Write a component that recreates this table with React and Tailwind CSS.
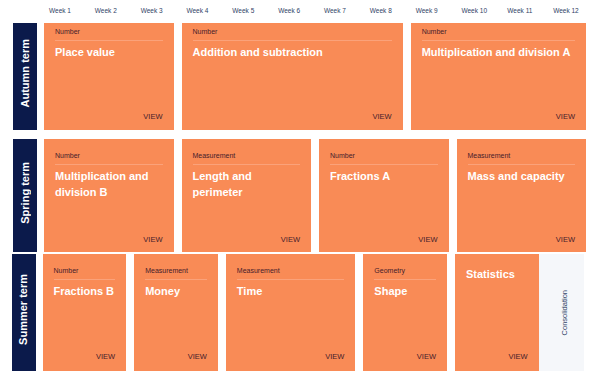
import React from "react";

const weeks = Array.from({ length: 12 }, (_, i) => `Week ${i + 1}`);

const terms = [
  {
    name: "Autumn term",
    height: "h-[107px]",
    gap: "mt-0",
    shift: "ml-0",
    pt: "pt-[4px]",
    pb: "pb-[9px]",
    blocks: [
      { span: "col-span-3", cat: "Number", title: "Place value" },
      { span: "col-span-5", cat: "Number", title: "Addition and subtraction" },
      { span: "col-span-4", cat: "Number", title: "Multiplication and division A" },
    ],
  },
  {
    name: "Spring term",
    height: "h-[113px]",
    gap: "mt-[9px]",
    shift: "ml-0",
    pt: "pt-[12px]",
    pb: "pb-[8px]",
    blocks: [
      { span: "col-span-3", cat: "Number", title: "Multiplication and division B" },
      { span: "col-span-3", cat: "Measurement", title: "Length and perimeter" },
      { span: "col-span-3", cat: "Number", title: "Fractions A" },
      { span: "col-span-3", cat: "Measurement", title: "Mass and capacity" },
    ],
  },
  {
    name: "Summer term",
    height: "h-[117px]",
    gap: "mt-[2px]",
    shift: "-ml-[1.5px]",
    pt: "pt-[12px]",
    pb: "pb-[10px]",
    blocks: [
      { span: "col-span-2", cat: "Number", title: "Fractions B" },
      { span: "col-span-2", cat: "Measurement", title: "Money" },
      { span: "col-span-3", cat: "Measurement", title: "Time" },
      { span: "col-span-2", cat: "Geometry", title: "Shape" },
      { span: "col-span-2", cat: null, title: "Statistics" },
    ],
    consolidation: true,
  },
];

const Block = ({ block, pt, pb }) => (
  <div className={`${block.span} flex flex-col bg-[#f98b56] px-[11px] ${pt} ${pb}`}>
    {block.cat && (
      <>
        <div className="text-[7px] leading-[9px] text-[#45202b]">{block.cat}</div>
        <div className="mt-[3.5px] h-px bg-[#fba27a]" />
        <div className="mt-[3px] text-[11px] font-bold leading-[16px] text-white">
          {block.title}
        </div>
      </>
    )}
    {!block.cat && (
      <div className="text-[11px] font-bold leading-[16px] text-white">{block.title}</div>
    )}
    <div className="mt-auto text-right text-[7.5px] leading-[9px] text-[#45202b]">VIEW</div>
  </div>
);

const App = () => {
  return (
    <div
      className="h-[379px] w-[600px] bg-white pl-[13px]"
      style={{ fontFamily: '"Liberation Sans", Arial, sans-serif' }}
    >
      <div className="flex h-[23px] items-center">
        <div className="w-[31px] shrink-0" />
        <div className="grid w-[542px] grid-cols-12 gap-x-2">
          {weeks.map((w) => (
            <div key={w} className="pl-[5px] text-[6.5px] leading-none text-[#2f4266]">
              {w}
            </div>
          ))}
        </div>
      </div>

      {terms.map((term) => (
        <div key={term.name} className={`flex ${term.height} ${term.gap} ${term.shift}`}>
          <div className="mr-[7px] flex w-[24px] shrink-0 items-center justify-center bg-[#0b1a4b] pb-[6px]">
            <span className="rotate-180 text-[11px] font-bold leading-none text-white [writing-mode:vertical-rl]">
              {term.name}
            </span>
          </div>
          <div className="grid w-[542px] grid-cols-12 gap-x-2">
            {term.blocks.map((b) => (
              <Block key={b.title} block={b} pt={term.pt} pb={term.pb} />
            ))}
            {term.consolidation && (
              <div className="col-span-1 -ml-2 flex items-center justify-center bg-[#f5f7fa] pl-[6px]">
                <span className="rotate-180 text-[7.5px] leading-none text-[#2f4266] [writing-mode:vertical-rl]">
                  Consolidation
                </span>
              </div>
            )}
          </div>
        </div>
      ))}
    </div>
  );
};

export default App;
